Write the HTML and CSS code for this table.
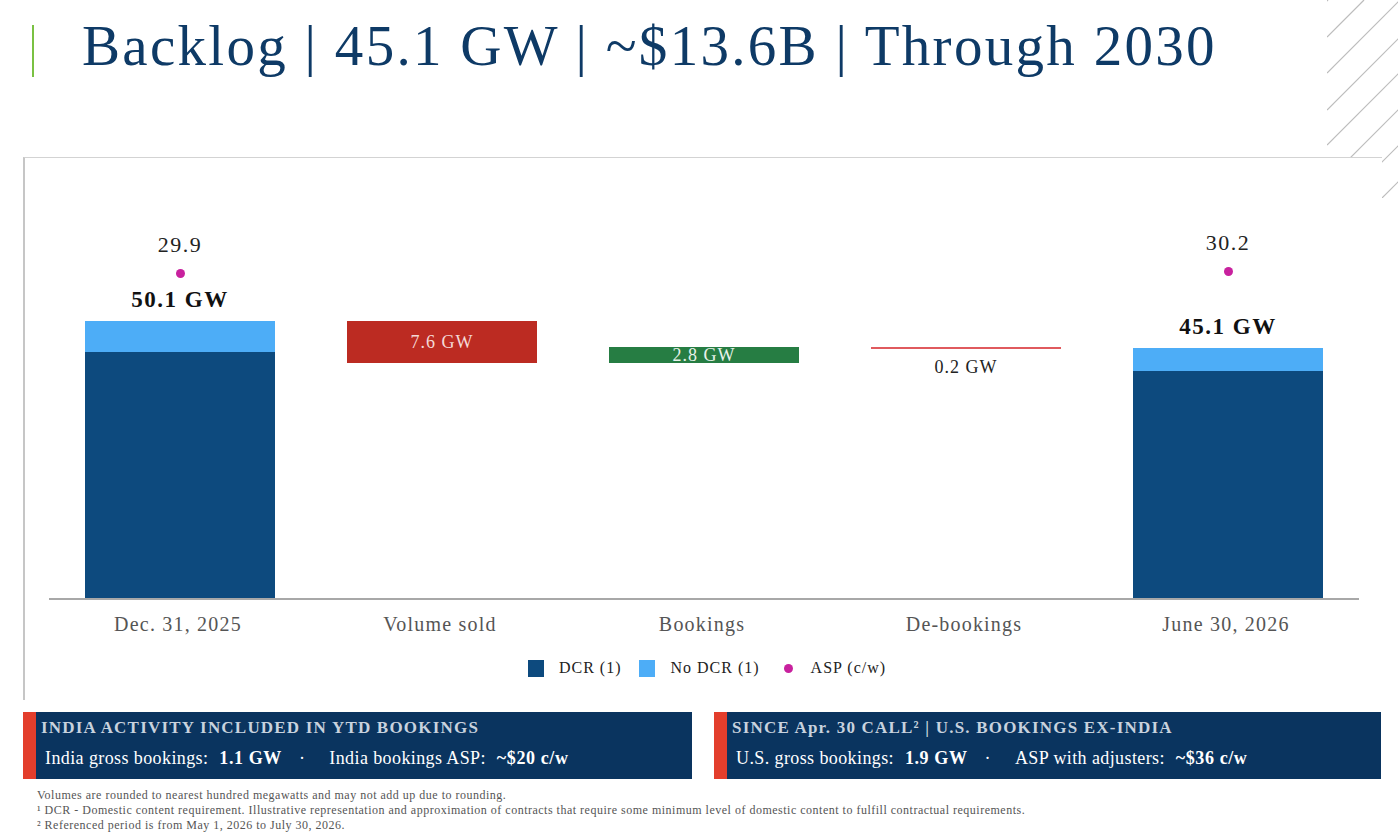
FILE: index.html
```html
<!DOCTYPE html>
<html lang="en">
<head>
<meta charset="utf-8">
<title>Backlog</title>
<link rel="stylesheet" href="styles.css">
</head>
<body>
<svg class="hatch" viewBox="0 0 71 198" width="71" height="198" aria-hidden="true">
  <g stroke="#bcbcbc" stroke-width="1.2" fill="none">
    <line x1="0" y1="1" x2="1" y2="0"/>
    <line x1="0" y1="37" x2="37" y2="0"/>
    <line x1="0" y1="73" x2="73" y2="0"/>
    <line x1="0" y1="110" x2="110" y2="0"/>
    <line x1="0" y1="145" x2="145" y2="0"/>
    <line x1="0" y1="181" x2="181" y2="0"/>
    <line x1="0" y1="217" x2="217" y2="0"/>
    <line x1="0" y1="253" x2="253" y2="0"/>
  </g>
</svg>

<header class="title-bar">
  <div class="accent"></div>
  <h1>Backlog | 45.1 GW | ~$13.6B | Through 2030</h1>
</header>

<section class="chart">
  <div class="plot">
    <div class="col">
      <div class="asp" style="margin-top:35px"><span class="asp-val">29.9</span><span class="dot"></span></div>
      <div class="fill"></div>
      <div class="total">50.1 GW</div>
      <div class="bar">
        <div class="nodcr" style="height:31px"></div>
        <div class="dcr" style="height:246px"></div>
      </div>
    </div>
    <div class="col">
      <div class="fill"></div>
      <div class="bar down" style="height:42px">7.6 GW</div>
      <div class="base" style="height:235px"></div>
    </div>
    <div class="col">
      <div class="fill"></div>
      <div class="bar up" style="height:16px">2.8 GW</div>
      <div class="base" style="height:235px"></div>
    </div>
    <div class="col">
      <div class="fill"></div>
      <div class="bar line"></div>
      <div class="below">0.2 GW</div>
      <div class="base" style="height:221px"></div>
    </div>
    <div class="col">
      <div class="asp" style="margin-top:33px"><span class="asp-val">30.2</span><span class="dot"></span></div>
      <div class="fill"></div>
      <div class="total">45.1 GW</div>
      <div class="bar">
        <div class="nodcr" style="height:23px"></div>
        <div class="dcr" style="height:227px"></div>
      </div>
    </div>
  </div>
  <div class="axis">
    <span>Dec. 31, 2025</span>
    <span>Volume sold</span>
    <span>Bookings</span>
    <span>De-bookings</span>
    <span>June 30, 2026</span>
  </div>
  <div class="legend">
    <span class="key"><span class="swatch dcr"></span>DCR (1)</span>
    <span class="key"><span class="swatch nodcr"></span>No DCR (1)</span>
    <span class="key"><span class="legend-dot"></span>ASP (c/w)</span>
  </div>
</section>

<section class="callouts">
  <div class="callout callout-left">
    <div class="stripe"></div>
    <div class="callout-body">
      <div class="callout-title">INDIA ACTIVITY INCLUDED IN YTD BOOKINGS</div>
      <div class="callout-line">India gross bookings: <b>1.1 GW</b><span class="sep">·</span>India bookings ASP: <b>~$20 c/w</b></div>
    </div>
  </div>
  <div class="callout callout-right">
    <div class="stripe"></div>
    <div class="callout-body">
      <div class="callout-title">SINCE Apr. 30 CALL² | U.S. BOOKINGS EX-INDIA</div>
      <div class="callout-line">U.S. gross bookings: <b>1.9 GW</b><span class="sep">·</span>ASP with adjusters: <b>~$36 c/w</b></div>
    </div>
  </div>
</section>

<footer class="notes">
  <p>Volumes are rounded to nearest hundred megawatts and may not add up due to rounding.</p>
  <p>¹ DCR - Domestic content requirement. Illustrative representation and approximation of contracts that require some minimum level of domestic content to fulfill contractual requirements.</p>
  <p>² Referenced period is from May 1, 2026 to July 30, 2026.</p>
</footer>
</body>
</html>
```

FILE: styles.css
```css
body {
  margin: 0;
  width: 1398px;
  height: 840px;
  overflow: hidden;
  position: relative;
  background: #fff;
  font-family: "Liberation Serif", "DejaVu Serif", serif;
  color: #222;
}

.hatch {
  position: absolute;
  left: 1327px;
  top: 0;
  z-index: 0;
}

.title-bar {
  display: flex;
  padding: 25px 0 0 32px;
}

.accent {
  flex: none;
  width: 2px;
  height: 52px;
  background: #7ac143;
}

h1 {
  margin: 0 0 0 48px;
  font-weight: normal;
  font-size: 57px;
  line-height: 42px;
  letter-spacing: 2.3px;
  color: #0e3a66;
  white-space: nowrap;
}

.chart {
  position: relative;
  z-index: 1;
  background: #fff;
  margin: 80px 0 0 23px;
  width: 1359px;
  height: 543px;
  box-sizing: border-box;
  border-left: 2px solid #c6c6c6;
  border-top: 1px solid #d3d3d3;
}

.plot {
  display: grid;
  grid-template-columns: repeat(5, 262px);
  margin: 42px 0 0 24px;
  width: 1310px;
  height: 398px;
  border-bottom: 2px solid #a8a8a8;
}

.col {
  display: flex;
  flex-direction: column;
  align-items: center;
}

.asp {
  display: flex;
  flex-direction: column;
  align-items: center;
}

.asp-val {
  font-size: 22px;
  line-height: 20px;
  letter-spacing: 1.5px;
  color: #222;
}

.dot {
  width: 9px;
  height: 9px;
  border-radius: 50%;
  background: #c8219e;
  margin-top: 14px;
}

.fill {
  flex: 1;
}

.total {
  font-weight: bold;
  font-size: 23px;
  line-height: 24px;
  letter-spacing: 1.5px;
  color: #111;
  margin-bottom: 9px;
}

.bar {
  width: 190px;
  display: flex;
  flex-direction: column;
}

.dcr {
  background: #0d4a7e;
}

.nodcr {
  background: #4dadf7;
}

.down {
  background: #bc2b22;
  color: #f4d9d6;
  align-items: center;
  justify-content: center;
  font-size: 18px;
  letter-spacing: 1px;
}

.up {
  background: #267d43;
  color: #e8f2ea;
  font-size: 18px;
  line-height: 16px;
  letter-spacing: 1px;
  text-align: center;
}

.line {
  height: 2px;
  background: #e05a5e;
}

.below {
  font-size: 18px;
  line-height: 20px;
  letter-spacing: 1px;
  margin-top: 8px;
  color: #222;
}

.axis {
  display: grid;
  grid-template-columns: repeat(5, 262px);
  margin: 12px 0 0 22px;
  font-size: 20px;
  line-height: 24px;
  letter-spacing: 1.2px;
  color: #555;
  text-align: center;
}

.legend {
  display: flex;
  justify-content: center;
  align-items: center;
  gap: 18px;
  margin: 22px 0 0 27px;
  width: 1310px;
  font-size: 16px;
  line-height: 20px;
  letter-spacing: 1px;
  color: #222;
}

.key {
  display: flex;
  align-items: center;
}

.swatch {
  width: 16px;
  height: 17px;
  margin-right: 15px;
}

.legend-dot {
  width: 9px;
  height: 9px;
  border-radius: 50%;
  background: #c8219e;
  margin: 0 18px 0 6px;
}

.callouts {
  display: flex;
  gap: 22px;
  margin: 12px 0 0 23px;
}

.callout {
  display: flex;
  height: 67px;
  background: #0a345f;
}

.callout-left {
  width: 669px;
}

.callout-right {
  width: 667px;
}

.stripe {
  flex: none;
  width: 13px;
  background: #e33e2c;
}

.callout-body {
  padding: 6px 0 0 5px;
}

.callout-title {
  font-weight: bold;
  font-size: 17px;
  line-height: 20px;
  letter-spacing: 1.2px;
  color: #c8d2de;
  white-space: nowrap;
}

.callout-line {
  margin: 9px 0 0 4px;
  font-size: 18px;
  line-height: 22px;
  letter-spacing: 0.4px;
  color: #fff;
  white-space: nowrap;
}

.callout-line b {
  margin-left: 6px;
  letter-spacing: 0.6px;
}

.sep {
  display: inline-block;
  margin: 0 24px 0 17px;
}

.notes {
  margin: 9px 0 0 37px;
  font-size: 12px;
  line-height: 15px;
  letter-spacing: 0.5px;
  color: #555;
}

.notes p {
  margin: 0;
  white-space: nowrap;
}
```
